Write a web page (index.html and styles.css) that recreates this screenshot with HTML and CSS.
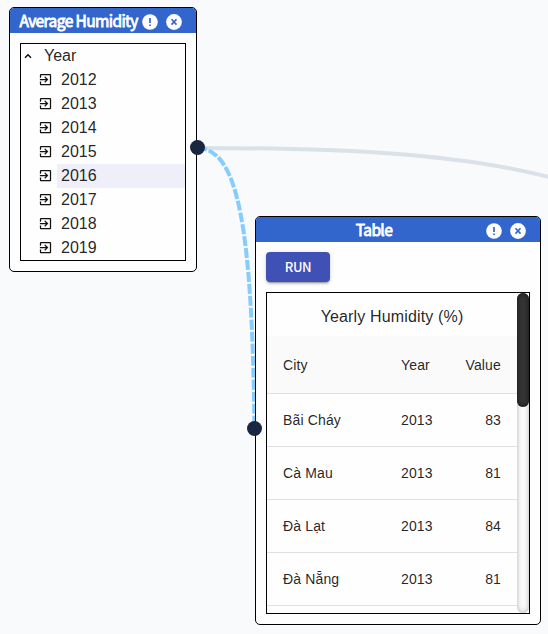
FILE: index.html
```html
<!DOCTYPE html>
<html lang="vi">
<head>
<meta charset="utf-8">
<title>Humidity flow</title>
<link rel="stylesheet" href="styles.css">
</head>
<body>
<svg class="defs" width="0" height="0">
  <symbol id="info" viewBox="0 0 16 16"><circle cx="8" cy="8" r="7.8" fill="#fff"/><path d="M8 4v5M8 10.4v1.7" stroke="#3366cc" stroke-width="1.7"/></symbol>
  <symbol id="close" viewBox="0 0 16 16"><circle cx="8" cy="8" r="7.9" fill="#fff"/><path d="M5.5 5.2l5 5.4M10.5 5.2l-5 5.4" stroke="#3366cc" stroke-width="1.6"/></symbol>
  <symbol id="leaf" viewBox="0 0 24 24"><path d="M10.09 15.59L11.5 17l5-5-5-5-1.41 1.41L12.67 11H3v2h9.67l-2.58 2.59zM19 3H5c-1.11 0-2 .9-2 2v4h2V5h14v14H5v-4H3v4c0 1.1.89 2 2 2h14c1.1 0 2-.9 2-2V5c0-1.1-.9-2-2-2z"/></symbol>
</svg>
<svg class="edges" width="548" height="634">
  <path class="edge" d="M197 148C330 148 460 152 560 180"/>
  <path class="edge edge-active" d="M197 148C239 148 252 230 254.500 428"/>
</svg>

<section class="node node-tree">
  <header class="bar"><h2>Average Humidity</h2><svg class="icon"><use href="#info"/></svg><svg class="icon icon-close"><use href="#close"/></svg></header>
  <div class="tree">
    <div class="branch"><svg class="caret" viewBox="0 0 8 6"><path d="M1 4.8L4 1.8l3 3"/></svg><span>Year</span></div>
    <div class="leaf"><svg><use href="#leaf"/></svg><span>2012</span></div>
    <div class="leaf"><svg><use href="#leaf"/></svg><span>2013</span></div>
    <div class="leaf"><svg><use href="#leaf"/></svg><span>2014</span></div>
    <div class="leaf"><svg><use href="#leaf"/></svg><span>2015</span></div>
    <div class="leaf selected"><svg><use href="#leaf"/></svg><span>2016</span></div>
    <div class="leaf"><svg><use href="#leaf"/></svg><span>2017</span></div>
    <div class="leaf"><svg><use href="#leaf"/></svg><span>2018</span></div>
    <div class="leaf"><svg><use href="#leaf"/></svg><span>2019</span></div>
  </div>
  <i class="port port-out"></i>
</section>

<section class="node node-table">
  <header class="bar"><h2>Table</h2><div class="tools"><svg class="icon"><use href="#info"/></svg><svg class="icon"><use href="#close"/></svg></div></header>
  <button class="run">RUN</button>
  <div class="panel">
    <div class="content">
      <div class="caption">Yearly Humidity (%)</div>
      <table>
        <thead><tr><th>City</th><th>Year</th><th>Value</th></tr></thead>
        <tbody>
          <tr><td>Bãi Cháy</td><td>2013</td><td>83</td></tr>
          <tr><td>Cà Mau</td><td>2013</td><td>81</td></tr>
          <tr><td>Đà Lạt</td><td>2013</td><td>84</td></tr>
          <tr><td>Đà Nẵng</td><td>2013</td><td>81</td></tr>
        </tbody>
      </table>
    </div>
    <div class="track"><div class="thumb"></div></div>
  </div>
  <i class="port port-in"></i>
</section>
</body>
</html>
```
FILE: styles.css
```css
* { box-sizing: border-box; }
body {
  margin: 0;
  width: 548px;
  height: 634px;
  position: relative;
  overflow: hidden;
  background: #f9fafc;
  font-family: "Liberation Sans", Arial, sans-serif;
  color: rgba(0, 0, 0, .87);
}
.defs { position: absolute; }
.edges { position: absolute; left: 0; top: 0; }
.edge { fill: none; stroke: #d9e2e8; stroke-width: 4; }
.edge-active { stroke: #85ccff; stroke-dasharray: 10 2; }
.node {
  position: absolute;
  background: #fefefe;
  border: 1px solid #000;
  border-radius: 5px;
}
.node-tree { left: 9px; top: 7px; width: 188px; height: 265px; }
.node-table { left: 255px; top: 216px; width: 286px; height: 409px; }
.bar {
  position: relative;
  display: flex;
  align-items: center;
  height: 25px;
  background: #3366cc;
  border-radius: 4px 4px 0 0;
  color: #fff;
}
.bar h2 {
  margin: 0;
  font: 400 15.5px/25px "Noto Sans CJK SC", sans-serif;
  -webkit-text-stroke: .8px #fff;
  letter-spacing: -.6px;
  white-space: nowrap;
}
.node-tree .bar { padding-left: 9.5px; }
.node-tree h2 { width: 122.5px; }
.node-table .bar { justify-content: center; padding-right: 48px; }
.icon { display: block; flex: none; width: 16px; height: 16px; margin-top: 3px; }
.icon-close { margin-left: 8px; }
.tools { position: absolute; right: 14px; top: 3px; display: flex; gap: 8px; }
.tree {
  margin: 10px;
  border: 1px solid #000;
  height: 218px;
  font-size: 16px;
  line-height: 24px;
}
.branch, .leaf { display: flex; align-items: center; height: 24px; }
.caret { width: 8px; height: 6px; margin: 0 12px 0 3px; fill: none; stroke: #111; stroke-width: 1.5; }
.leaf svg { flex: none; width: 15px; height: 15px; margin: 0 4px 1px 17px; fill: #111; }
.leaf span { flex: 1; padding-left: 4px; }
.leaf.selected span { background: #eeeff8; }
.port { position: absolute; width: 15px; height: 15px; border-radius: 50%; background: #1a2740; }
.port-out { right: -9px; top: 132px; }
.port-in { left: -9px; top: 204px; }
.run {
  display: block;
  width: 64px;
  height: 30px;
  margin: 10px;
  padding: 0;
  border: 0;
  border-radius: 4px;
  background: #3f51b5;
  color: #fff;
  font: 500 13px/30px "Noto Sans CJK SC", sans-serif;
  letter-spacing: -.4px;
  box-shadow: 0 3px 1px -2px rgba(0, 0, 0, .2), 0 2px 2px rgba(0, 0, 0, .14), 0 1px 5px rgba(0, 0, 0, .12);
}
.panel { display: flex; width: 264px; height: 322px; margin-left: 10px; border: 1px solid #000; overflow: hidden; }
.content { width: 250px; flex: none; }
.caption { height: 43px; line-height: 47px; font-size: 16px; text-align: center; letter-spacing: .15px; }
table { width: 250px; border-collapse: separate; border-spacing: 0; table-layout: fixed; font-size: 14px; letter-spacing: .15px; }
th, td { height: 53px; padding: 0; border-bottom: 1px solid #e0e0e0; font-weight: 400; text-align: left; }
th { height: 58px; background: #fafafa; }
th:nth-child(1), td:nth-child(1) { width: 134px; padding-left: 16px; }
th:nth-child(2), td:nth-child(2) { width: 52px; }
th:nth-child(3), td:nth-child(3) { width: 64px; padding-right: 16px; text-align: right; }
.track { width: 12px; height: 320px; flex: none; border-radius: 6px; background: #f9faf9; box-shadow: inset 0 0 5px rgba(0, 0, 0, .3); }
.thumb { height: 114px; border-radius: 6px; background: #333; box-shadow: inset 0 0 4px #111; }
```
